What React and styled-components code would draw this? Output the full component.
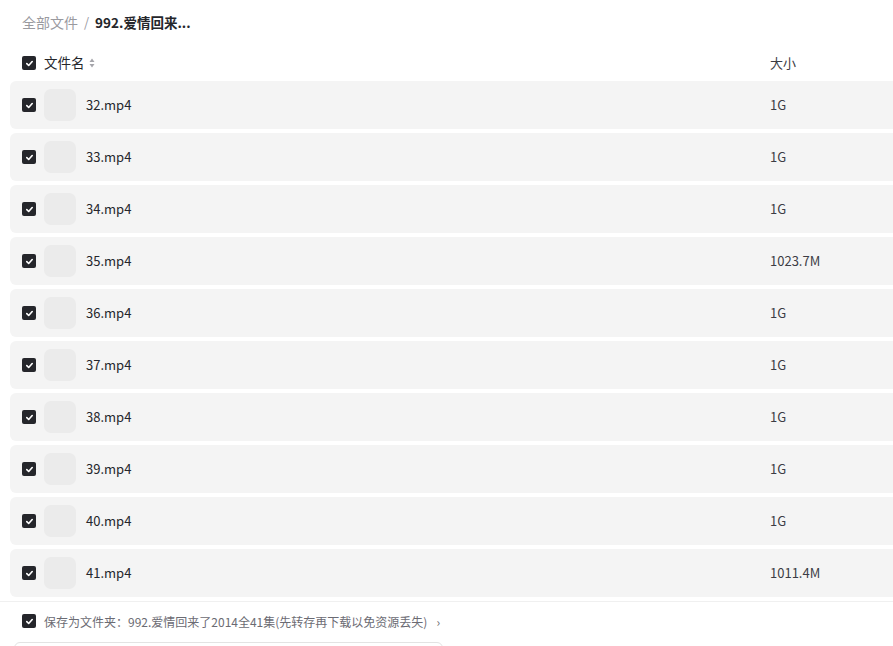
import React from "react";
import styled, { createGlobalStyle } from "styled-components";

const Global = createGlobalStyle`
  html, body { margin: 0; padding: 0; background: #fff; }
  body { font-family: "Noto Sans CJK SC", "Noto Sans", sans-serif; overflow: hidden; width: 893px; height: 646px; }
`;

const Page = styled.div`
  width: 893px;
  height: 646px;
  overflow: hidden;
  padding-left: 10px;
  box-sizing: border-box;
`;

const Breadcrumb = styled.div`
  display: flex;
  align-items: center;
  height: 45px;
  padding-left: 12px;
  padding-bottom: 2px;
  box-sizing: border-box;
  font-size: 14px;
  gap: 6px;
`;

const Crumb = styled.span`
  color: ${(p) => (p.$current ? "#25262b" : "#9a9a9f")};
  font-weight: ${(p) => (p.$current ? 700 : 400)};
  font-size: ${(p) => (p.$current ? 13.5 : 14)}px;
`;

const Sep = styled.span`
  color: #9a9a9f;
  font-size: 13px;
`;

const Grid = styled.div`
  display: grid;
  grid-template-columns: 748px 1fr;
  align-items: center;
  padding-left: 12px;
  width: 920px;
  box-sizing: border-box;
`;

const HeaderRow = styled(Grid)`
  height: 36px;
  font-size: 13.5px;
  color: #25262b;
`;

const Row = styled(Grid)`
  height: 48px;
  margin-bottom: 4px;
  background: #f4f4f4;
  border-radius: 6px;
  font-size: 13px;
  color: #25262b;
`;

const NameCell = styled.div`
  display: flex;
  align-items: center;
`;

const Label = styled.span`
  position: relative;
  top: -1px;
`;

const Size = styled.div`
  font-size: 13px;
  color: #3c3c44;
  position: relative;
  top: -1px;
`;

const Box = styled.span`
  width: 14px;
  height: 14px;
  border-radius: 2px;
  background: #25262b;
  display: inline-flex;
  align-items: center;
  justify-content: center;
  flex: none;
  margin-right: ${(p) => p.$gap || 8}px;
`;

const Thumb = styled.div`
  width: 32px;
  height: 32px;
  border-radius: 7px;
  background: #ebebeb;
  margin-right: 10px;
`;

const SortIcon = styled.svg`
  margin-left: 4px;
`;

const Footer = styled.div`
  border-top: 1px solid #f0f0f0;
  margin-left: -10px;
  padding: 11px 0 0 22px;
  display: flex;
  align-items: center;
  font-size: 12px;
  color: #6b6b73;
  height: 16px;
`;

const Arrow = styled.span`
  margin-left: 9px;
  font-size: 12px;
  color: #6b6b73;
`;

const InputBox = styled.div`
  margin-top: 13px;
  margin-left: 4px;
  width: 427px;
  height: 30px;
  border: 1px solid #e3e3e3;
  border-radius: 6px;
`;

const Check = ({ gap }) => (
  <Box $gap={gap}>
    <svg width="9" height="9" viewBox="0 0 10 10">
      <path d="M2 5.2 L4.1 7.2 L8 2.8" stroke="#fff" strokeWidth="1.8" fill="none" strokeLinecap="round" strokeLinejoin="round" />
    </svg>
  </Box>
);

const files = [
  ["32.mp4", "1G"],
  ["33.mp4", "1G"],
  ["34.mp4", "1G"],
  ["35.mp4", "1023.7M"],
  ["36.mp4", "1G"],
  ["37.mp4", "1G"],
  ["38.mp4", "1G"],
  ["39.mp4", "1G"],
  ["40.mp4", "1G"],
  ["41.mp4", "1011.4M"],
];

export default function App() {
  return (
    <>
      <Global />
      <Page>
        <Breadcrumb>
          <Crumb>全部文件</Crumb>
          <Sep>/</Sep>
          <Crumb $current>992.爱情回来...</Crumb>
        </Breadcrumb>
        <HeaderRow>
          <NameCell>
            <Check />
            <Label>文件名</Label>
            <SortIcon width="6" height="10" viewBox="0 0 6 10">
              <path d="M3 0.5 L5.5 4 L0.5 4 Z" fill="#a5a5ab" />
              <path d="M3 9.5 L5.5 6 L0.5 6 Z" fill="#a5a5ab" />
            </SortIcon>
          </NameCell>
          <Size>大小</Size>
        </HeaderRow>
        {files.map(([name, size]) => (
          <Row key={name}>
            <NameCell>
              <Check />
              <Thumb />
              <Label>{name}</Label>
            </NameCell>
            <Size>{size}</Size>
          </Row>
        ))}
        <Footer>
          <Check />
          保存为文件夹：992.爱情回来了2014全41集(先转存再下载以免资源丢失)
          <Arrow>›</Arrow>
        </Footer>
        <InputBox />
      </Page>
    </>
  );
}
